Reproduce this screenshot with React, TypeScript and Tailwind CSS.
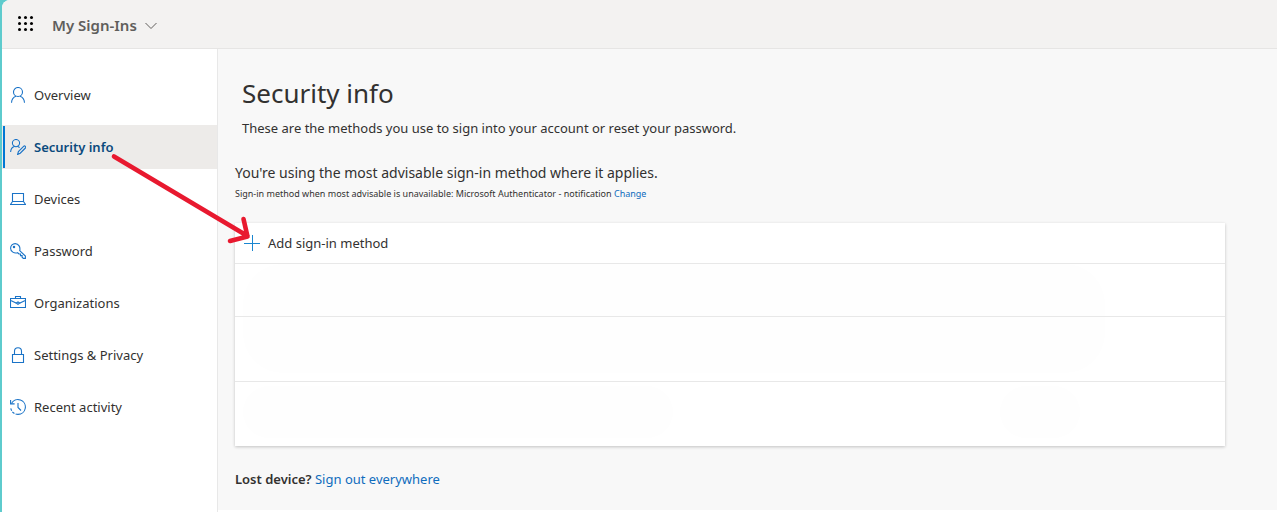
import type { ReactNode } from "react";

type NavItem = { label: string; icon: ReactNode; active?: boolean };

function Icon({ children }: { children: ReactNode }) {
  return (
    <svg
      className="size-4 shrink-0 text-[#1a73c7]"
      viewBox="0 0 16 16"
      fill="none"
      stroke="currentColor"
      strokeWidth="1.1"
      aria-hidden="true"
    >
      {children}
    </svg>
  );
}

const navItems: NavItem[] = [
  {
    label: "Overview",
    icon: (
      <Icon>
        <circle cx="8" cy="5" r="4.500" />
        <path d="M1.500 15.800c.2-3.300 2.100-5.700 4.500-6.500M14.500 15.800c-.2-3.300-2.100-5.700-4.500-6.500" />
      </Icon>
    ),
  },
  {
    label: "Security info",
    active: true,
    icon: (
      <Icon>
        <circle cx="6" cy="4.100" r="3.600" />
        <path d="M.6 13c.2-2.800 1.800-4.800 3.700-5.400M7.700 7.400c.8.300 1.300.600 1.900 1.200" />
        <path d="M7.600 15.500l.8-3 5.200-5.200c1.200-1.100 2.900.5 1.800 1.700l-5.200 5.200z" />
      </Icon>
    ),
  },
  {
    label: "Devices",
    icon: (
      <Icon>
        <path d="M2.500 10V2.500h11V10M2.500 10.500h11l2 3H.5z" />
      </Icon>
    ),
  },
  {
    label: "Password",
    icon: (
      <Icon>
        <path d="M9.700 7.700c.9-3.400-1-7.100-4.500-7.100A4.600 4.600 0 0 0 .6 5.200c0 3.500 3.600 5.500 7 4.500l1.300 1.300h1.600v1.600h1.600v1.600l1.200 1.200h2.100v-2.300z" />
        <circle cx="4" cy="4" r=".7" />
      </Icon>
    ),
  },
  {
    label: "Organizations",
    icon: (
      <Icon>
        <path d="M.5 3.500h15v9H.5zM5.500 3.500v-2h5v2M.8 5.500L6 8M15.200 5.500L10 8" />
        <path d="M6.200 8L8 7l1.800 1L8 9.300z" />
      </Icon>
    ),
  },
  {
    label: "Settings & Privacy",
    icon: (
      <Icon>
        <path d="M2.500 7.500h11v8h-11zM4.500 7.500V4.200a3.500 3.500 0 0 1 7 0v3.300" />
      </Icon>
    ),
  },
  {
    label: "Recent activity",
    icon: (
      <Icon>
        <path d="M1.500 4.400A7.400 7.400 0 1 1 8 15.400" />
        <path d="M8 15.400A7.400 7.400 0 0 1 .7 8.800" strokeDasharray="2.500 1.200" />
        <path d="M.6 1v3.900h4M8 4v4.500l3 3" />
      </Icon>
    ),
  },
];

function Header() {
  return (
    <header className="flex h-[49px] items-center border-b border-[#e6e5e4] bg-[#f3f2f1] pl-4">
      <button type="button" aria-label="App launcher" className="flex size-4 items-center justify-center">
        <svg className="size-4" viewBox="0 0 16 16" fill="#000" aria-hidden="true">
          {[1.5, 7.5, 13.5].map((y) =>
            [1.5, 7.5, 13.5].map((x) => <circle key={`${x}-${y}`} cx={x} cy={y} r="1.5" />),
          )}
        </svg>
      </button>
      <button type="button" className="ml-[18px] flex items-center gap-2 pt-0.5 text-[15px] font-semibold text-[#605e5c]">
        My Sign-Ins
        <svg className="mt-0.5 h-2 w-3" viewBox="0 0 12 8" fill="none" stroke="#605e5c" aria-hidden="true">
          <path d="M.5 1L6 6.500 11.500 1" />
        </svg>
      </button>
    </header>
  );
}

function Sidebar() {
  return (
    <nav aria-label="Account" className="w-[216px] shrink-0 border-r border-[#e8e8e8] bg-white pt-6">
      <ul className="flex flex-col gap-2">
        {navItems.map((item) => (
          <li key={item.label}>
            <a
              href="#"
              aria-current={item.active ? "page" : undefined}
              className={
                item.active
                  ? "flex h-11 items-center bg-[#edebe9] pl-px text-[13px] font-semibold text-[#0b4a7d]"
                  : "flex h-11 items-center pl-2 text-[13px] text-[#323130]"
              }
            >
              {item.active && <span className="mr-[5px] h-[42px] w-0.5 bg-[#0078d4]" />}
              {item.icon}
              <span className="pt-px pl-2">{item.label}</span>
            </a>
          </li>
        ))}
      </ul>
    </nav>
  );
}

export default function App() {
  return (
    <div className="relative min-h-screen bg-[#5ecbcd] pl-0.5 font-['Noto_Sans','Open_Sans',sans-serif] text-[#323130]">
      <div className="flex min-h-screen flex-col overflow-hidden rounded-tl-lg bg-white">
        <Header />
        <div className="flex grow">
          <Sidebar />
          <main className="mb-0.5 min-w-0 grow bg-[#f8f8f8] pt-6 pr-[52px] pl-[17px]">
            <div className="pl-[7px]">
              <h1 className="text-[26px] leading-10">Security info</h1>
              <p className="mt-[5px] text-[13px] leading-5">
                These are the methods you use to sign into your account or reset your password.
              </p>
            </div>
            <p className="mt-[25px] text-[14px] leading-5">You're using the most advisable sign-in method where it applies.</p>
            <p className="mt-[3px] text-[9px] leading-4">
              Sign-in method when most advisable is unavailable: Microsoft Authenticator - notification{" "}
              <a href="#" className="text-[#0f6cbd]">Change</a>
            </p>
            <section aria-label="Sign-in methods" className="mt-[21px] bg-white shadow-[0_1px_3px_rgba(0,0,0,0.22)]">
              <button type="button" className="flex h-10 w-full items-center gap-2 pl-[9px] text-[13px]">
                <svg className="size-4" viewBox="0 0 16 16" fill="none" stroke="#1a86d0" aria-hidden="true">
                  <path d="M8.500 0v16M0 8.500h16" />
                </svg>
                <span className="pt-px">Add sign-in method</span>
              </button>
              <div className="h-[53px] border-t border-[#e8e8e8] pr-[120px] pl-2">
                <div className="h-full rounded-t-[40px] bg-[#fefefe]" />
              </div>
              <div className="h-[65px] border-t border-[#e8e8e8] pr-[120px] pb-2 pl-2">
                <div className="h-full rounded-b-[40px] bg-[#fefefe]" />
              </div>
              <div className="flex h-[65px] justify-between border-t border-[#e8e8e8] pt-1 pr-[145px] pb-2 pl-2">
                <div className="w-[430px] rounded-full bg-[#fefefe]" />
                <div className="w-[80px] rounded-full bg-[#fefefe]" />
              </div>
            </section>
            <p className="mt-[23px] text-[13px] leading-5">
              <strong className="font-semibold">Lost device?</strong>{" "}
              <a href="#" className="text-[#0f6cbd]">Sign out everywhere</a>
            </p>
          </main>
        </div>
      </div>
      <svg
        className="pointer-events-none absolute top-[150px] left-[108px] h-[100px] w-[150px]"
        viewBox="108 150 150 100"
        fill="none"
        stroke="#e8192f"
        strokeWidth="4.600"
        strokeLinecap="round"
        strokeLinejoin="round"
        aria-hidden="true"
      >
        <path d="M114 156.500L247.500 236M243.500 219L247.500 236.500 230 241" />
      </svg>
    </div>
  );
}
